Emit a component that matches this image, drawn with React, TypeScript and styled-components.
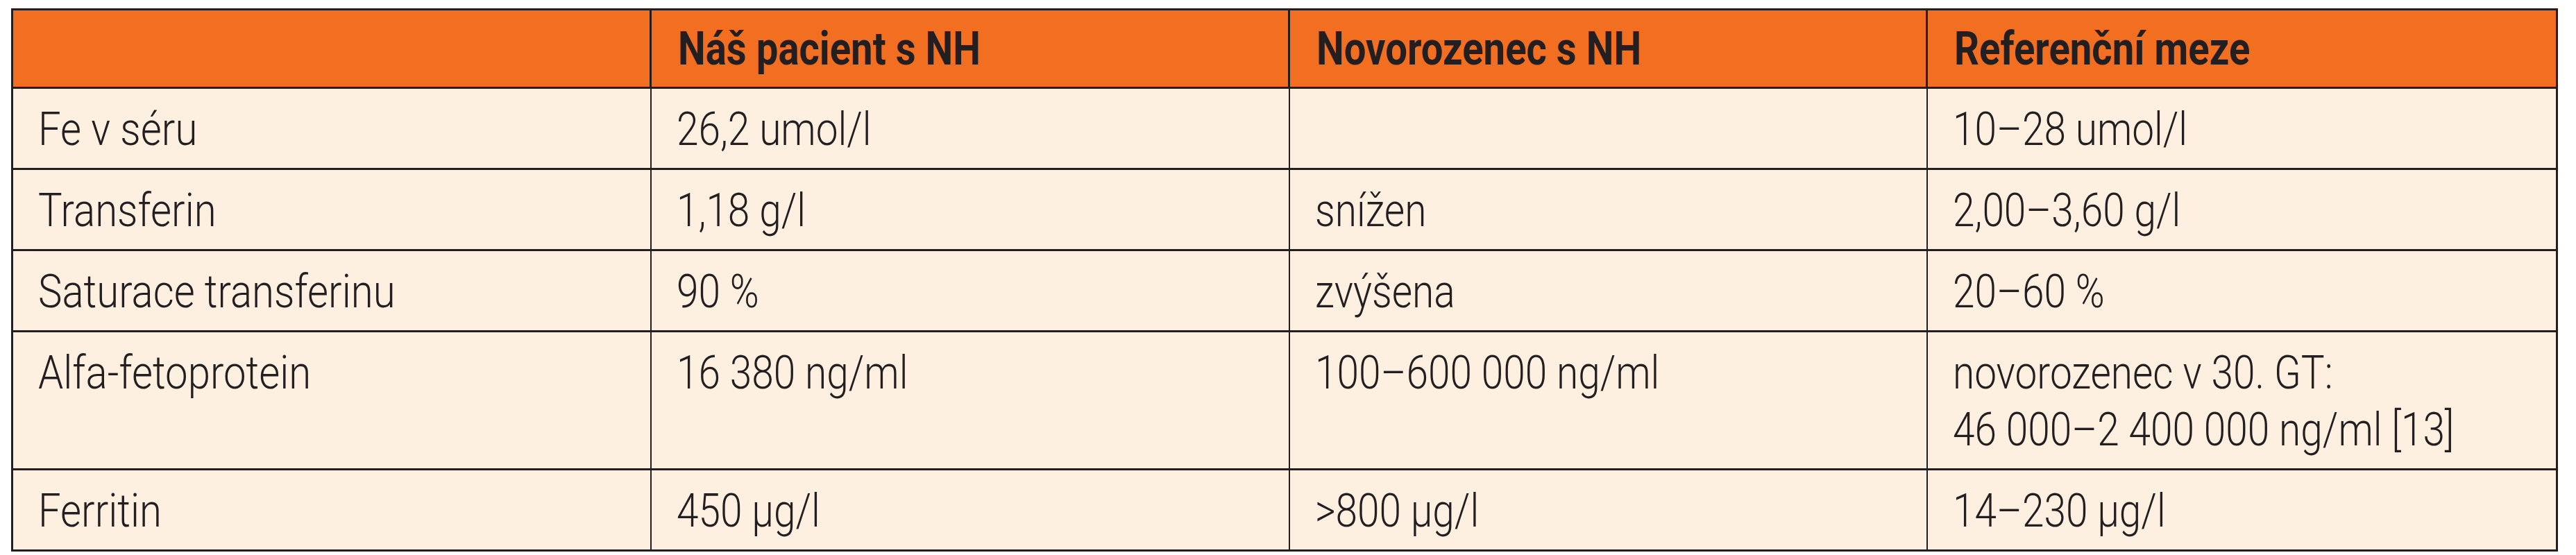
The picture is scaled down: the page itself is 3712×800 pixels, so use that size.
import styled, { createGlobalStyle } from "styled-components";

const GlobalStyle = createGlobalStyle`
    html, body {
        margin: 0;
        padding: 0;
        background: #ffffff;
    }
    body {
        font-family: Roboto, "Liberation Sans", sans-serif;
        color: #231f20;
    }
`;

const Page = styled.div`
    padding: 12px 26px 0 16px;
`;

const Table = styled.table`
    width: 3670px;
    border-collapse: collapse;
    table-layout: fixed;
    border: 3px solid #231f20;
`;

const HeadCell = styled.th`
    background: #f26f21;
    border: 3px solid #231f20;
    height: 110px;
    padding: 0 38px;
    text-align: left;
    font-size: 67px;
    font-weight: 700;
    line-height: 82px;
    color: #231f20;
    white-space: nowrap;
`;

const Cell = styled.td`
    background: #fdf0e1;
    border-left: 2px solid #231f20;
    border-right: 2px solid #231f20;
    border-top: 3px solid #231f20;
    border-bottom: 3px solid #231f20;
    padding: 18px 36px 14px 36px;
    vertical-align: top;
    font-size: 66px;
    font-weight: 300;
    line-height: 82px;
    white-space: nowrap;
`;

// the original uses a condensed face, so the text is narrowed
const Condensed = styled.span<{ $ratio: number }>`
    display: block;
    transform: scaleX(${(p) => p.$ratio});
    transform-origin: left center;
`;

interface RowData {
    name: string;
    patient: string;
    newborn: string;
    reference: string[];
}

const rows: RowData[] = [
    { name: "Fe v séru", patient: "26,2 umol/l", newborn: "", reference: ["10–28 umol/l"] },
    { name: "Transferin", patient: "1,18 g/l", newborn: "snížen", reference: ["2,00–3,60 g/l"] },
    { name: "Saturace transferinu", patient: "90 %", newborn: "zvýšena", reference: ["20–60 %"] },
    {
        name: "Alfa-fetoprotein",
        patient: "16 380 ng/ml",
        newborn: "100–600 000 ng/ml",
        reference: ["novorozenec v 30. GT:", "46 000–2 400 000 ng/ml [13]"],
    },
    { name: "Ferritin", patient: "450 µg/l", newborn: ">800 µg/l", reference: ["14–230 µg/l"] },
];

const headers = ["", "Náš pacient s NH", "Novorozenec s NH", "Referenční meze"];

function App() {
    return (
        <Page>
            <GlobalStyle />
            <Table>
                <colgroup>
                    <col style={{ width: 920 }} />
                    <col style={{ width: 920 }} />
                    <col style={{ width: 919 }} />
                    <col />
                </colgroup>
                <thead>
                    <tr>
                        {headers.map((h, i) => (
                            <HeadCell key={i}>
                                <Condensed $ratio={0.84}>{h}</Condensed>
                            </HeadCell>
                        ))}
                    </tr>
                </thead>
                <tbody>
                    {rows.map((row) => (
                        <tr key={row.name}>
                            <Cell>
                                <Condensed $ratio={0.88}>{row.name}</Condensed>
                            </Cell>
                            <Cell>
                                <Condensed $ratio={0.86}>{row.patient}</Condensed>
                            </Cell>
                            <Cell>
                                <Condensed $ratio={0.86}>{row.newborn}</Condensed>
                            </Cell>
                            <Cell>
                                {row.reference.map((line) => (
                                    <Condensed key={line} $ratio={0.86}>
                                        {line}
                                    </Condensed>
                                ))}
                            </Cell>
                        </tr>
                    ))}
                </tbody>
            </Table>
        </Page>
    );
}

export default App;
